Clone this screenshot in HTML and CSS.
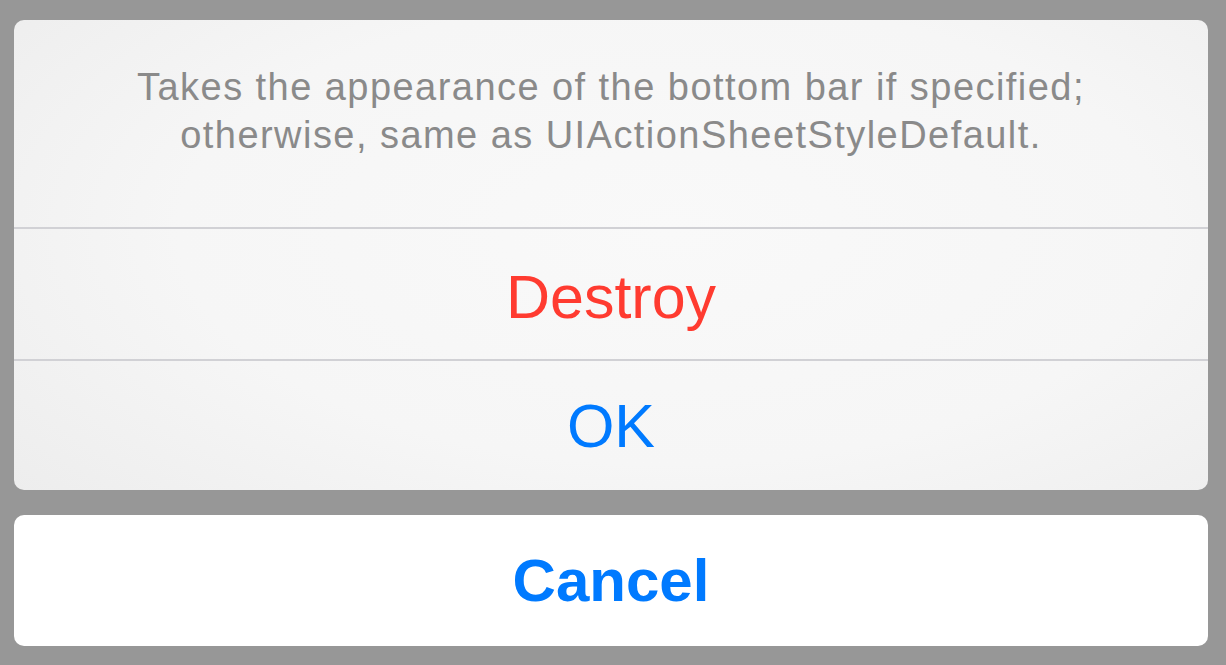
FILE: index.html
```html
<!DOCTYPE html>
<html>
<head>
<meta charset="utf-8">
<link rel="stylesheet" href="styles.css">
</head>
<body>
<div class="screen">
  <div class="sheet">
    <div class="title">Takes the appearance of the bottom bar if specified;<br>otherwise, same as UIActionSheetStyleDefault.</div>
    <div class="sep"></div>
    <div class="btn destroy">Destroy</div>
    <div class="sep"></div>
    <div class="btn ok">OK</div>
  </div>
  <div class="cancel">Cancel</div>
</div>
</body>
</html>
```
FILE: styles.css
```css
html, body {
  margin: 0;
  padding: 0;
  background: #979797;
}
.screen {
  width: 1226px;
  height: 665px;
  box-sizing: border-box;
  padding: 20px 18px 0 14px;
  display: flex;
  flex-direction: column;
  gap: 25px;
  font-family: "Liberation Sans", Arial, sans-serif;
}
.sheet {
  height: 470px;
  border-radius: 10px;
  overflow: hidden;
  display: flex;
  flex-direction: column;
  background: radial-gradient(ellipse 75% 90% at 55% 45%, #f9f9f9 0%, #f6f6f6 55%, #ececec 100%);
}
.title {
  height: 207px;
  box-sizing: border-box;
  padding-top: 43px;
  text-align: center;
  color: #8a8a8a;
  font-size: 38px;
  line-height: 48px;
  letter-spacing: 1.45px;
}
.sep {
  height: 2px;
  background: #d1d1d5;
  flex: none;
}
.btn {
  display: flex;
  align-items: center;
  justify-content: center;
  font-size: 61px;
}
.destroy {
  height: 130px;
  color: #ff3b30;
  padding-top: 6px;
  box-sizing: border-box;
}
.ok {
  height: 129px;
  color: #007aff;
}
.cancel {
  height: 131px;
  border-radius: 10px;
  background: #ffffff;
  display: flex;
  align-items: center;
  justify-content: center;
  color: #007aff;
  font-size: 60px;
  font-weight: bold;
}
```
